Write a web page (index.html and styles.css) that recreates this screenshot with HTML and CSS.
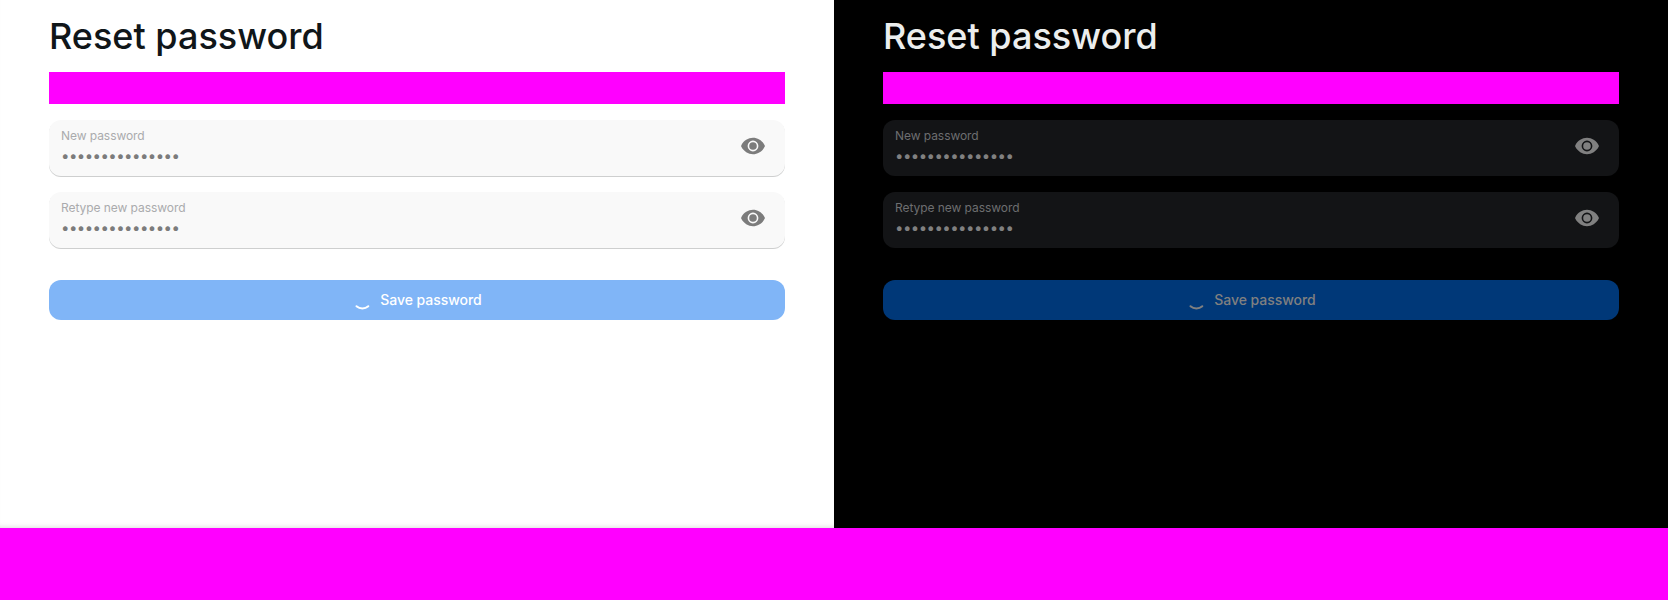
FILE: index.html
```html
<!DOCTYPE html>
<html lang="en">
<head>
<meta charset="utf-8">
<title>Reset password</title>
<link rel="stylesheet" href="styles.css">
</head>
<body>
<svg width="0" height="0" class="defs"><defs>
<symbol id="eye" viewBox="0 0 24 24"><path fill-rule="evenodd" d="M12 3.800C7.200 3.800 2.700 6.600.35 11.200Q-.1 12 .35 12.800C2.700 17.400 7.200 20.200 12 20.200S21.300 17.400 23.650 12.800Q24.100 12 23.650 11.200C21.300 6.600 16.800 3.800 12 3.800ZM12 6.600A5.400 5.400 0 1 0 12 17.400A5.400 5.400 0 1 0 12 6.600ZM12 8.200A3.800 3.800 0 1 1 12 15.800A3.800 3.800 0 1 1 12 8.200Z"/></symbol>
<symbol id="spin" viewBox="0 0 20 20"><path d="M4.500 16.200A9 9 0 0 0 16.300 16.200" fill="none" stroke="currentColor" stroke-width="2" stroke-linecap="round"/></symbol>
</defs></svg>
<main class="themes">
  <section class="panel light">
    <h1>Reset password</h1>
    <div class="slot"></div>
    <form>
      <div class="field"><div class="entry"><label for="a">New password</label><input id="a" type="password" value="123456789012345" disabled></div><svg class="eye"><use href="#eye"/></svg></div>
      <div class="field"><div class="entry"><label for="b">Retype new password</label><input id="b" type="password" value="123456789012345" disabled></div><svg class="eye"><use href="#eye"/></svg></div>
      <button type="button" disabled><svg class="spin"><use href="#spin"/></svg><span>Save password</span></button>
    </form>
  </section>
  <section class="panel dark">
    <h1>Reset password</h1>
    <div class="slot"></div>
    <form>
      <div class="field"><div class="entry"><label for="c">New password</label><input id="c" type="password" value="123456789012345" disabled></div><svg class="eye"><use href="#eye"/></svg></div>
      <div class="field"><div class="entry"><label for="d">Retype new password</label><input id="d" type="password" value="123456789012345" disabled></div><svg class="eye"><use href="#eye"/></svg></div>
      <button type="button" disabled><svg class="spin"><use href="#spin"/></svg><span>Save password</span></button>
    </form>
  </section>
</main>
<footer class="bar"></footer>
</body>
</html>
```
FILE: styles.css
```css
* { box-sizing: border-box; }
body { margin: 0; font-family: Inter, sans-serif; height: 600px; overflow: hidden; display: flex; flex-direction: column; }
.defs { position: absolute; }
.themes { display: flex; height: 528px; }
.panel { flex: 1; padding: 14px 49px 0; }
.light { background: #fff; --title: #101619; --field: #f9f9f9; --line: #cecfcf; --label: #aaabad; --value: #7c7c7c; --button: #80b5f7; --text: #fff; box-shadow: inset 0 -5px 5px -4px #0002; }
.dark { background: #000; --title: #eceeee; --field: #131416; --line: transparent; --label: #6d6e70; --value: #808080; --button: #003878; --text: #808080; }
h1 { margin: 0 0 14px; height: 44px; line-height: 44px; font-size: 36px; font-weight: 500; color: var(--title); }
.slot { height: 32px; background: #f0f; }
form { margin-top: 16px; display: grid; gap: 16px; }
.field { height: 56px; padding: 0 20px 0 12px; border-radius: 12px; background: var(--field); box-shadow: 0 1px 0 var(--line); display: flex; }
.entry { flex: 1; padding-top: 8px; }
label { display: block; font-size: 12px; line-height: 16px; letter-spacing: -0.06px; color: var(--label); }
input { display: block; width: 100%; height: 22px; padding: 0; border: 0; background: none; font: 15px Inter, sans-serif; letter-spacing: -0.55px; color: var(--value); }
.eye { width: 24px; height: 24px; margin-top: 14px; fill: var(--value); }
button { margin-top: 16px; height: 40px; padding: 0; border: 0; border-radius: 12px; background: var(--button); color: var(--text); font: 500 14px/20px Inter, sans-serif; letter-spacing: -0.05px; display: flex; align-items: center; justify-content: center; gap: 8px; }
.spin { width: 20px; height: 20px; }
.bar { height: 72px; background: #f0f; }
```
